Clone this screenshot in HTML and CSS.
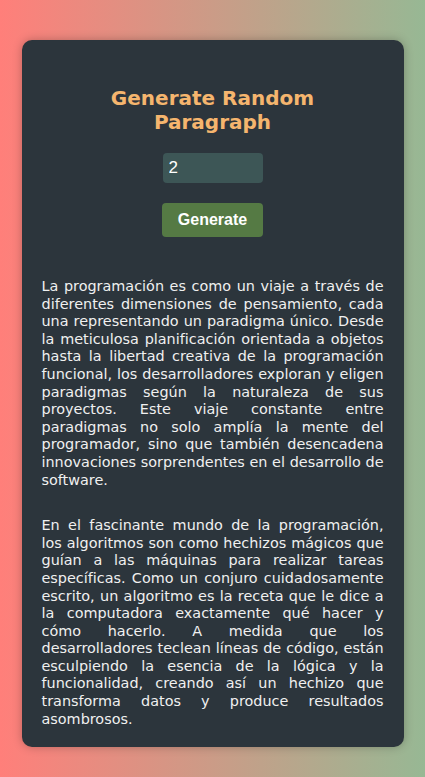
FILE: index.html
```html
<!DOCTYPE html>
<html lang="es">
<head>
<meta charset="utf-8">
<title>Generate Random Paragraph</title>
<link rel="stylesheet" href="styles.css">
</head>
<body>
<div class="card">
  <h1 class="title">Generate Random Paragraph</h1>
  <input class="count" type="number" value="2">
  <button class="generate">Generate</button>
  <div class="output">
    <p>La programación es como un viaje a través de diferentes dimensiones de pensamiento, cada una representando un paradigma único. Desde la meticulosa planificación orientada a objetos hasta la libertad creativa de la programación funcional, los desarrolladores exploran y eligen paradigmas según la naturaleza de sus proyectos. Este viaje constante entre paradigmas no solo amplía la mente del programador, sino que también desencadena innovaciones sorprendentes en el desarrollo de software.</p>
    <p>En el fascinante mundo de la programación, los algoritmos son como hechizos mágicos que guían a las máquinas para realizar tareas específicas. Como un conjuro cuidadosamente escrito, un algoritmo es la receta que le dice a la computadora exactamente qué hacer y cómo hacerlo. A medida que los desarrolladores teclean líneas de código, están esculpiendo la esencia de la lógica y la funcionalidad, creando así un hechizo que transforma datos y produce resultados asombrosos.</p>
  </div>
</div>
</body>
</html>
```

FILE: styles.css
```css
html, body {
  margin: 0;
  padding: 0;
}
body {
  min-height: 777px;
  background: linear-gradient(to right, #ff7f7a, #97b894);
  font-family: "DejaVu Sans", Verdana, sans-serif;
  padding-top: 40px;
  padding-bottom: 28px;
  box-sizing: border-box;
}
.card {
  box-sizing: border-box;
  width: 382px;
  margin: 0 auto;
  background: #2c353c;
  border-radius: 10px;
  padding: 20px 20px 19px;
  display: flex;
  flex-direction: column;
  align-items: center;
  box-shadow: 0 0 10px rgba(0, 0, 0, 0.25);
}
.title {
  max-width: 290px;
  margin: 26px 0 0;
  font-size: 20px;
  line-height: 24px;
  font-weight: bold;
  color: #f5b56e;
  text-align: center;
}
.count {
  box-sizing: border-box;
  margin-top: 19px;
  width: 100px;
  height: 30px;
  border: none;
  border-radius: 4px;
  background: #3d5656;
  color: #ffffff;
  font-family: "Liberation Sans", Arial, sans-serif;
  font-size: 17px;
  padding: 0 6px;
  outline: none;
  -moz-appearance: textfield;
}
.count::-webkit-inner-spin-button,
.count::-webkit-outer-spin-button {
  -webkit-appearance: none;
  margin: 0;
}
.generate {
  margin-top: 20px;
  width: 101px;
  height: 34px;
  border: none;
  border-radius: 4px;
  background: #557a44;
  color: #ffffff;
  font-family: "Liberation Sans", Arial, sans-serif;
  font-weight: bold;
  font-size: 16px;
  cursor: pointer;
}
.output {
  align-self: stretch;
  margin-top: 41px;
  display: flex;
  flex-direction: column;
  gap: 28px;
}
.output p {
  margin: 0;
  color: #f0f0f0;
  font-size: 14.4px;
  line-height: 17.6px;
  text-align: justify;
}
```
